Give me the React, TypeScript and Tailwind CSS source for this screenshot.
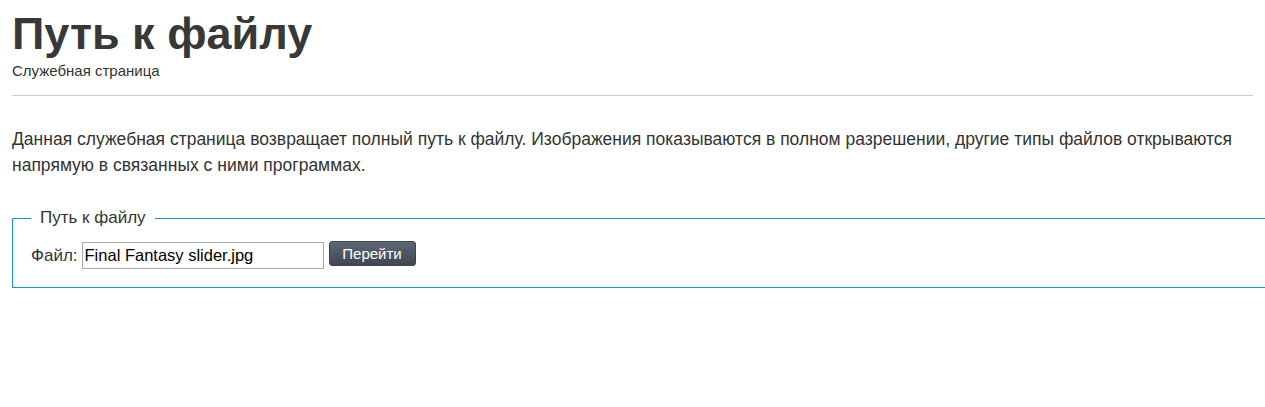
export default function App() {
  return (
    <div className="min-h-[407px] overflow-hidden bg-white px-3 text-[#333] [font-family:'Liberation_Sans',Arial,sans-serif]">
      <div className="pt-[7px]">
        <h1 className="text-[45px] font-bold leading-[54px] text-[#383838]">Путь к файлу</h1>
        <div className="mt-[1px] text-[15px] leading-[18px] text-[#333]">Служебная страница</div>
      </div>
      <hr className="mt-[15px] border-0 border-t border-[#cccccc]" />

      <p className="mt-[30px] text-[17.5px] leading-[26px] text-[#333]">
        Данная служебная страница возвращает полный путь к файлу. Изображения показываются в полном разрешении, другие типы файлов открываются напрямую в связанных с ними программах.
      </p>

      <fieldset className="mr-[-40px] mt-[30px] border border-[#0f9bbf] px-[18px] pb-[18px] pt-[14px]">
        <legend className="px-[9px] text-[17px] leading-[20px] text-[#333]">Путь к файлу</legend>
        <div className="flex items-start">
          <label className="text-[17px] leading-[27px] text-[#333]">Файл:</label>
          <input
            defaultValue="Final Fantasy slider.jpg"
            className="ml-[4px] h-[27px] w-[242px] border border-[#a9a9a9] px-[2px] text-[16.5px] text-black outline-none"
          />
          <button className="-mt-px ml-[5px] h-[25px] w-[87px] rounded-[3px] border border-[#3d4450] bg-gradient-to-b from-[#5d6675] to-[#404854] text-[15px] leading-[20px] text-white">
            Перейти
          </button>
        </div>
      </fieldset>
    </div>
  )
}
